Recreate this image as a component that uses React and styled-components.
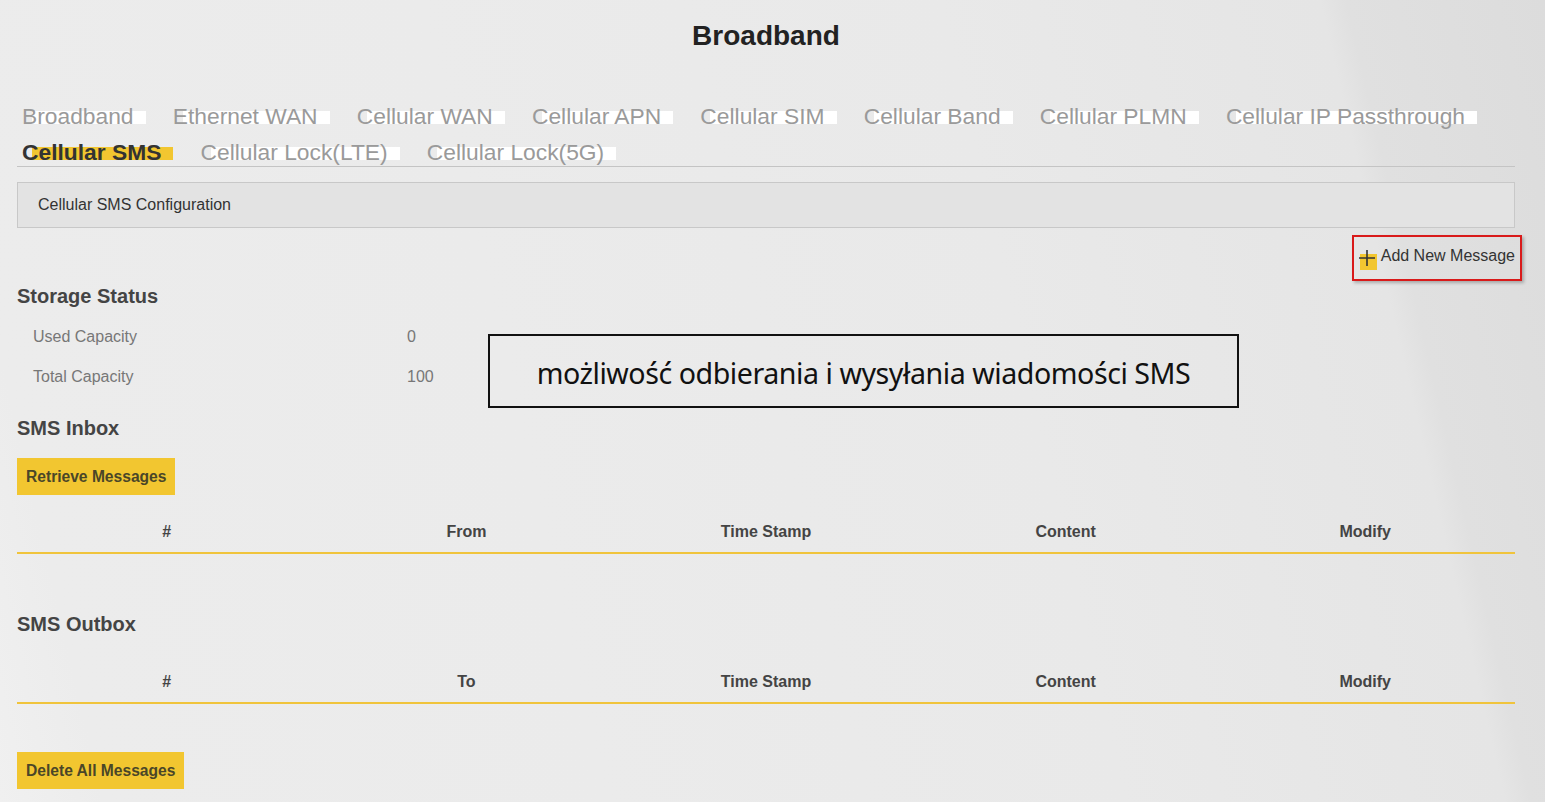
import { createGlobalStyle, styled } from "styled-components";

const GlobalStyle = createGlobalStyle`
  html, body {
    margin: 0;
    padding: 0;
  }
  body {
    font-family: "Liberation Sans", Arial, sans-serif;
    color: #333;
  }
`;

const Page = styled.div`
  position: relative;
  min-height: 100vh;
  box-sizing: border-box;
  padding: 19px 30px 12px 17px;
  background: linear-gradient(
    77deg,
    #f0f0f0 0%,
    #ececec 6%,
    #ebebeb 35%,
    #e9e9e9 65%,
    #e5e5e5 87%,
    #e0e0e0 88.5%,
    #dcdcdc 100%
  );
`;

const Title = styled.h1`
  margin: 0;
  text-align: center;
  font-size: 28px;
  line-height: 34px;
  font-weight: bold;
  color: #222;
`;

const Tabs = styled.nav`
  display: flex;
  flex-wrap: wrap;
  row-gap: 10px;
  margin-top: 50px;
  padding-left: 5px;
  padding-bottom: 1px;
  border-bottom: 1px solid #c4c4c4;
`;

const Tab = styled.span`
  position: relative;
  isolation: isolate;
  margin-right: 39.2px;
  font-size: 22.8px;
  line-height: 26px;
  white-space: nowrap;
  color: ${(p) => (p.$active ? "#333" : "#9a9a9a")};
  font-weight: ${(p) => (p.$active ? "bold" : "normal")};

  &::after {
    content: "";
    position: absolute;
    z-index: -1;
    left: 10px;
    right: -12px;
    bottom: 5px;
    height: 13px;
    background: ${(p) => (p.$active ? "#f2c630" : "#ffffff")};
  }
`;

const ConfigBar = styled.div`
  margin-top: 15px;
  height: 44px;
  display: flex;
  align-items: center;
  padding-left: 20px;
  background: #e3e3e3;
  border: 1px solid #c8c8c8;
  font-size: 16px;
  color: #333;
`;

const ActionRow = styled.div`
  display: flex;
  justify-content: flex-end;
  margin-top: 7px;
  margin-right: -7px;
`;

const AddButton = styled.button`
  display: flex;
  align-items: flex-start;
  gap: 4px;
  height: 46px;
  box-sizing: border-box;
  padding: 10px 5px 0 3px;
  background: transparent;
  border: 2px solid #d91a1a;
  box-shadow: 2px 2px 3px rgba(0, 0, 0, 0.25);
  font-family: inherit;
  font-size: 16px;
  color: #333;
  cursor: pointer;
`;

const PlusIcon = styled.span`
  position: relative;
  width: 20px;
  height: 20px;
  margin-top: 1px;

  &::before {
    content: "";
    position: absolute;
    left: 3px;
    top: 6px;
    width: 17px;
    height: 16px;
    background: #f2c630;
  }
`;

const SectionTitle = styled.h2`
  margin: ${(p) => p.$top || "0"} 0 0;
  font-size: 20px;
  line-height: 24px;
  font-weight: bold;
  color: #444;
`;

const InfoRow = styled.div`
  display: grid;
  grid-template-columns: 374px auto;
  height: 40px;
  align-items: center;
  padding-left: 16px;
  font-size: 16px;
  color: #777;
`;

const InfoList = styled.div`
  margin-top: 9px;
`;

const ActionButton = styled.button`
  display: block;
  height: 37px;
  padding: 0 9px;
  margin-top: ${(p) => p.$top || "0"};
  background: #f2c630;
  border: none;
  font-family: inherit;
  font-size: 15.6px;
  font-weight: bold;
  color: #4a4628;
  cursor: pointer;
`;

const TableHead = styled.div`
  display: grid;
  grid-template-columns: repeat(5, 1fr);
  height: 41px;
  align-items: center;
  margin-top: ${(p) => p.$top || "0"};
  border-bottom: 2px solid #f0c43c;
  font-size: 16px;
  font-weight: bold;
  color: #444;
  text-align: center;
`;

const Note = styled.div`
  position: absolute;
  left: 488px;
  top: 334px;
  width: 751px;
  height: 74px;
  box-sizing: border-box;
  border: 2px solid #111;
  display: flex;
  align-items: center;
  justify-content: center;
  padding-top: 2px;
  font-family: "Noto Sans", "Open Sans", sans-serif;
  font-size: 28.6px;
  letter-spacing: -0.45px;
  color: #111;
`;

const tabs = [
  "Broadband",
  "Ethernet WAN",
  "Cellular WAN",
  "Cellular APN",
  "Cellular SIM",
  "Cellular Band",
  "Cellular PLMN",
  "Cellular IP Passthrough",
  "Cellular SMS",
  "Cellular Lock(LTE)",
  "Cellular Lock(5G)",
];

const Plus = () => (
  <PlusIcon>
    <svg
      width="20"
      height="20"
      viewBox="0 0 20 20"
      style={{ position: "relative" }}
    >
      <path d="M10 2 V18 M2 10 H18" stroke="#333" strokeWidth="1.6" />
    </svg>
  </PlusIcon>
);

export default function App() {
  return (
    <>
      <GlobalStyle />
      <Page>
        <Title>Broadband</Title>
        <Tabs>
          {tabs.map((t) => (
            <Tab key={t} $active={t === "Cellular SMS"}>
              {t}
            </Tab>
          ))}
        </Tabs>
        <ConfigBar>Cellular SMS Configuration</ConfigBar>
        <ActionRow>
          <AddButton>
            <Plus />
            Add New Message
          </AddButton>
        </ActionRow>

        <SectionTitle $top="3px">Storage Status</SectionTitle>
        <InfoList>
          <InfoRow>
            <span>Used Capacity</span>
            <span>0</span>
          </InfoRow>
          <InfoRow>
            <span>Total Capacity</span>
            <span>100</span>
          </InfoRow>
        </InfoList>

        <SectionTitle $top="19px">SMS Inbox</SectionTitle>
        <ActionButton $top="18px">Retrieve Messages</ActionButton>
        <TableHead $top="16px">
          <span>#</span>
          <span>From</span>
          <span>Time Stamp</span>
          <span>Content</span>
          <span>Modify</span>
        </TableHead>

        <SectionTitle $top="58px">SMS Outbox</SectionTitle>
        <TableHead $top="25px">
          <span>#</span>
          <span>To</span>
          <span>Time Stamp</span>
          <span>Content</span>
          <span>Modify</span>
        </TableHead>
        <ActionButton $top="48px">Delete All Messages</ActionButton>

        <Note>możliwość odbierania i wysyłania wiadomości SMS</Note>
      </Page>
    </>
  );
}
